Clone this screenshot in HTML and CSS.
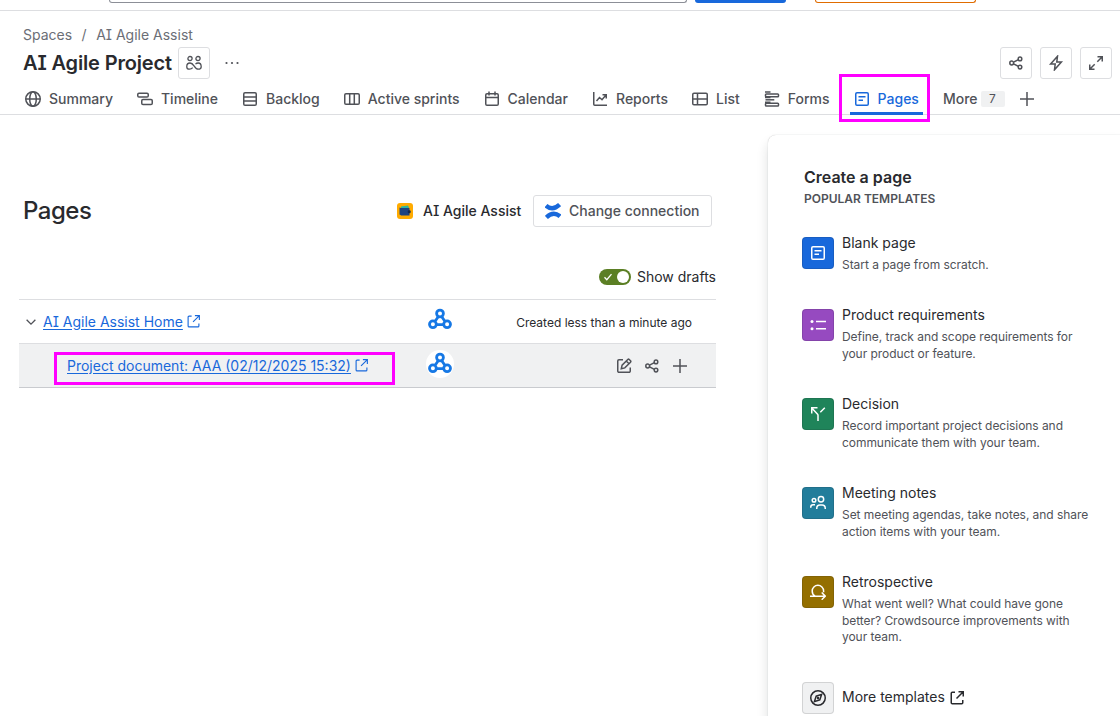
FILE: index.html
```html
<!DOCTYPE html>
<html lang="en">
  <head>
    <meta charset="UTF-8" />
    <meta name="viewport" content="width=device-width, initial-scale=1.0" />
    <title>AI Agile Project - Pages</title>
    <link rel="stylesheet" href="styles.css">
  </head>
  <body>
    <!-- shared icons -->
    <svg class="sprite">
      <symbol id="share" viewBox="0 0 16 16">
        <circle cx="3.7" cy="8" r="1.9" /><circle cx="12" cy="3.9" r="1.8" /><circle cx="12" cy="12.1" r="1.8" />
        <path d="M5.5 7.2 10.4 4.7M5.5 8.8l4.9 2.5" />
      </symbol>
      <symbol id="external" viewBox="0 0 16 16">
        <path d="M6 2.25H3.25a1 1 0 0 0-1 1v9.5a1 1 0 0 0 1 1h9.5a1 1 0 0 0 1-1V10M9.5 1.75h4.75V6.5M14 2 7.5 8.5" />
      </symbol>
      <symbol id="page" viewBox="0 0 16 16">
        <rect x="1.75" y="1.75" width="12.5" height="12.5" rx="1.25" /><path d="M4.5 5.75h7M4.5 9.25h4.5" />
      </symbol>
      <symbol id="plus" viewBox="0 0 16 16"><path d="M8 1v14M1 8h14" /></symbol>
      <symbol id="hook" viewBox="0 0 24 24">
        <path d="M10.4 8.500 7.300 13M13.600 8.500l3.100 4.500M8.500 16.600h7" /><circle cx="12" cy="5.500" r="3.400" /><circle cx="4.900" cy="16.300" r="3.400" /><circle cx="19.100" cy="16.300" r="3.400" />
      </symbol>
    </svg>

    <div class="topbar">
      <div class="search"></div>
      <div class="create"></div>
      <div class="trial"></div>
    </div>

    <header>
      <div class="breadcrumbs"><span>Spaces</span><span>/</span><span>AI Agile Assist</span></div>
      <div class="title-row">
        <h1>AI Agile Project</h1>
        <button class="icon-btn">
          <svg class="icon people" viewBox="0 0 16 16"><circle cx="4" cy="3.6" r="2.1" /><circle cx="12" cy="3.6" r="2.1" /><path d="M.8 12v-.7C.8 9.300 2.200 8 4 8c2.200 0 3 1.300 4 2.900s2.200 3.300 4.300 3.300c1.700 0 2.900-.8 2.900-2.500C15.200 9.500 14 8 12.200 8c-1.200 0-2 .4-2.700 1.100M.8 12c0 1.400 1 2.200 2.700 2.200 1.400 0 2.400-.5 3.200-1.500" /></svg>
        </button>
        <svg class="icon dots" viewBox="0 0 14 16"><circle cx="1.500" cy="8" r="1.100" /><circle cx="7" cy="8" r="1.100" /><circle cx="12.500" cy="8" r="1.100" /></svg>
        <div class="actions">
          <button class="icon-btn"><svg class="icon"><use href="#share" /></svg></button>
          <button class="icon-btn"><svg class="icon" viewBox="0 0 16 16"><path d="M9.500 1.200 2.600 9h4.600l-.7 5.800L13.400 7H8.800z" /></svg></button>
          <button class="icon-btn"><svg class="icon" viewBox="0 0 16 16"><path d="M9.500 1.750h4.750V6.500M14 2 9.300 6.700M6.500 14.250H1.750V9.500M2 14l4.700-4.700" /></svg></button>
        </div>
      </div>
      <nav>
        <a href="#"><svg class="icon" viewBox="0 0 16 16"><circle cx="8" cy="8" r="7.250" /><ellipse cx="8" cy="8" rx="3.300" ry="7.250" /><path d="M.75 8h14.500" /></svg>Summary</a>
        <a href="#"><svg class="icon" viewBox="0 0 16 16"><rect x=".75" y="2.250" width="10.500" height="3.700" rx="1.250" /><rect x="4.750" y="8.500" width="10.500" height="5" rx="1.250" /></svg>Timeline</a>
        <a href="#"><svg class="icon" viewBox="0 0 16 16"><rect x="1.750" y="1.750" width="12.500" height="12.500" rx="1.250" /><path d="M2 6h12M2 10h12" /></svg>Backlog</a>
        <a href="#"><svg class="icon" viewBox="0 0 16 16"><rect x=".75" y="2.750" width="14.500" height="10.500" rx="1.250" /><path d="M5.700 3v10M10.300 3v10" /></svg>Active sprints</a>
        <a href="#"><svg class="icon" viewBox="0 0 16 16"><rect x="1.750" y="2.750" width="12.500" height="11.500" rx="1.250" /><path d="M2 6.500h12M5 .5V4.500M11 .5V4.500" /></svg>Calendar</a>
        <a href="#"><svg class="icon" viewBox="0 0 16 16"><path d="M1.750 1v12.250a1 1 0 0 0 1 1H15M4.500 10l3-3.500 2.500 2.250 4-4.750M10.500 3.750h3.750V7.500" /></svg>Reports</a>
        <a href="#"><svg class="icon" viewBox="0 0 16 16"><rect x=".75" y="2.250" width="14.500" height="11.500" rx="1.250" /><path d="M1 8h14M5.500 2.500v11" /></svg>List</a>
        <a href="#"><svg class="icon" viewBox="0 0 16 16"><path d="M1 .9h5.500M1 6.600h5.500M1 11.200h5.500" /><rect x="1.500" y="3" width="13" height="2.800" rx=".8" /><path d="M1.500 8.800h8.800" /><rect x="1.500" y="12.200" width="13" height="2.800" rx=".8" /></svg>Forms</a>
        <a href="#" class="active"><svg class="icon"><use href="#page" /></svg>Pages<i class="highlight highlight-tab"></i></a>
        <a href="#" class="more">More<span class="badge">7</span></a>
        <svg class="icon add"><use href="#plus" /></svg>
      </nav>
    </header>

    <main>
      <section class="pages">
        <div class="pages-head">
          <h2>Pages</h2>
          <svg class="space-logo" viewBox="0 0 16 16">
            <rect width="16" height="16" rx="3" fill="#ffab00" />
            <path d="M4 5V3.500l7-1 1.200 2.500z" fill="#2fb5a2" />
            <path d="M2.500 4.500 4 5h8.500v7.500H4.200L2.500 11.500z" fill="#1f4480" />
            <rect x="10.800" y="7.300" width="2.800" height="3" rx="1" fill="#172b4d" />
          </svg>
          <span class="space-name">AI Agile Assist</span>
          <button class="connection">
            <svg class="confluence" viewBox="0 0 16 16"><path d="M1 2.600C5.200 6.200 9.500 6.400 14.600 1.600" /><path d="M15 13.400C10.800 9.800 6.500 9.600 1.400 14.400" /></svg>
            Change connection
          </button>
        </div>
        <div class="drafts">
          <span class="toggle"><svg viewBox="0 0 12 12"><path d="m2.500 6.300 2.300 2.400 4.700-5.500" /></svg><b></b></span>
          Show drafts
        </div>

        <div class="tree">
          <div class="row">
            <svg class="icon chevron" viewBox="0 0 16 16"><path d="m3 5.500 5 5 5-5" /></svg>
            <a href="#">AI Agile Assist Home</a>
            <svg class="icon ext"><use href="#external" /></svg>
            <span class="avatar"><svg><use href="#hook" /></svg></span>
            <span class="created">Created less than a minute ago</span>
          </div>
          <div class="row child">
            <a href="#">Project document: AAA (02/12/2025 15:32)</a>
            <svg class="icon ext"><use href="#external" /></svg>
            <span class="avatar"><svg><use href="#hook" /></svg></span>
            <span class="row-actions">
              <svg class="icon" viewBox="0 0 16 16"><path d="M7 1.750H3a1.250 1.250 0 0 0-1.250 1.250v10A1.250 1.250 0 0 0 3 14.250h10A1.250 1.250 0 0 0 14.250 13V9.500M5.300 10.700l.8-3.500 5.700-5.700a1 1 0 0 1 1.400 0l1.300 1.300a1 1 0 0 1 0 1.400L8.800 9.900zM10.300 3l2.700 2.700" /></svg>
              <svg class="icon"><use href="#share" /></svg>
              <svg class="icon"><use href="#plus" /></svg>
            </span>
            <i class="highlight highlight-row"></i>
          </div>
        </div>
      </section>

      <aside>
        <h3>Create a page</h3>
        <h4>POPULAR TEMPLATES</h4>
        <div class="template">
          <span class="tile blue"><svg class="icon"><use href="#page" /></svg></span>
          <div><h5>Blank page</h5><p>Start a page from scratch.</p></div>
        </div>
        <div class="template">
          <span class="tile purple"><svg class="icon" viewBox="0 0 16 16"><path d="M6 4.500h10M6 11.700h10" /><circle class="dot" cx="2" cy="4.500" r="1.500" /><circle class="dot" cx="2" cy="11.700" r="1.500" /></svg></span>
          <div><h5>Product requirements</h5><p>Define, track and scope requirements for<br>your product or feature.</p></div>
        </div>
        <div class="template">
          <span class="tile green"><svg class="icon" viewBox="0 0 16 16"><path d="M8 15V9.200a1.500 1.500 0 0 0-.4-1L2 2.300M1.750 7.500V1.750H7.500M10.300 6.200 14.800 1.700" /></svg></span>
          <div><h5>Decision</h5><p>Record important project decisions and<br>communicate them with your team.</p></div>
        </div>
        <div class="template">
          <span class="tile teal"><svg class="icon" viewBox="0 0 16 16"><circle cx="11" cy="4.200" r="2.700" /><circle cx="4" cy="5.300" r="1.800" /><path d="M6.750 14v-.7c0-2 1.300-3.300 3.200-3.300h2.100c1.900 0 3.200 1.300 3.200 3.300v.7M.75 12.700v-.5C.75 10.700 1.700 9.750 3 9.750h2" /></svg></span>
          <div><h5>Meeting notes</h5><p>Set meeting agendas, take notes, and share<br>action items with your team.</p></div>
        </div>
        <div class="template">
          <span class="tile brown"><svg class="icon" viewBox="0 0 16 16"><path d="M0 12.200h15M11.700 8.500l3.600 3.700-3.600 3.500M5 12C3 11 2.200 9 2.200 7a5.700 5.700 0 0 1 11.400 0v1.300" /></svg></span>
          <div><h5>Retrospective</h5><p>What went well? What could have gone<br>better? Crowdsource improvements with<br>your team.</p></div>
        </div>
        <div class="template more-templates">
          <span class="tile plain"><svg class="icon" viewBox="0 0 16 16"><circle cx="8" cy="8" r="7.250" /><path d="M11.600 4.400 9.800 9.800 4.400 11.600 6.200 6.200z" /><circle class="dot" cx="8" cy="8" r="1.200" /></svg></span>
          <h5>More templates</h5>
          <svg class="icon"><use href="#external" /></svg>
        </div>
      </aside>
    </main>
  </body>
</html>
```
FILE: styles.css
```css
* {
  box-sizing: border-box;
}

body {
  margin: 0;
  height: 716px;
  overflow: hidden;
  background: #fff;
  color: #292a2e;
  font-family: Inter, "Liberation Sans", sans-serif;
  font-feature-settings: "cv08";
  font-size: 14px;
  line-height: 20px;
}

h1, h2, h3, h4, h5, p {
  margin: 0;
}

button {
  padding: 0;
  background: #fff;
  border: 1px solid #dddee1;
  border-radius: 3px;
  font: inherit;
  color: #505258;
}

.sprite {
  position: absolute;
  width: 0;
  height: 0;
}

.icon {
  flex: none;
  width: 16px;
  height: 16px;
  fill: none;
  stroke: currentColor;
  stroke-width: 1.5;
}

/* top bar, only its lower edge is visible */
.topbar {
  display: flex;
  height: 11px;
  padding-left: 109px;
  border-bottom: 1px solid #dddee1;
}

.topbar div {
  height: 3px;
  border-radius: 0 0 4px 4px;
}

.search {
  width: 578px;
  border: 1px solid #8c8f97;
  border-top: 0;
}

.create {
  width: 91px;
  margin-left: 8px;
  background: #1868db;
}

.trial {
  width: 161px;
  margin-left: 29px;
  border: 1px solid #e06c00;
  border-top: 0;
}

/* project header */
header {
  height: 104px;
  padding: 14px 8px 0 23px;
  border-bottom: 1px solid #dddee1;
}

.breadcrumbs {
  display: flex;
  gap: 9.5px;
  color: #6b6e76;
}

.title-row {
  display: flex;
  align-items: center;
  height: 32px;
  margin-top: 2px;
}

h1 {
  width: 155px;
  font-size: 20px;
  line-height: 24px;
  font-weight: 600;
  letter-spacing: -0.15px;
  white-space: nowrap;
}

.icon-btn {
  display: flex;
  align-items: center;
  justify-content: center;
  width: 32px;
  height: 32px;
}

.people {
  stroke-width: 1.3;
}

.dots {
  width: 14px;
  margin-left: 15px;
  fill: #505258;
  stroke: none;
}

.actions {
  display: flex;
  gap: 8px;
  margin-left: auto;
}

nav {
  display: flex;
  align-items: center;
  gap: 24px;
  height: 36px;
  padding: 4px 0 0 2px;
}

nav a {
  display: flex;
  align-items: center;
  gap: 8px;
  height: 32px;
  color: #505258;
  font-weight: 500;
  text-decoration: none;
  white-space: nowrap;
}

nav a.active {
  position: relative;
  color: #1868db;
}

nav a.active::after {
  content: "";
  position: absolute;
  left: -4px;
  right: -4px;
  bottom: 0;
  height: 3px;
  background: #1868db;
}

nav a.more {
  gap: 3px;
}

.badge {
  width: 24px;
  height: 16px;
  border-radius: 2px;
  background: #f0f1f2;
  font-size: 12px;
  line-height: 16px;
  font-weight: 400;
  text-align: center;
}

.add {
  margin-left: -10px;
  color: #505258;
}

/* marker frames */
.highlight {
  position: absolute;
  border: 3px solid #ff00ff;
  z-index: 2;
}

.highlight-tab {
  left: -15px;
  top: -9px;
  width: 91px;
  height: 48px;
}

.highlight-row {
  left: 35px;
  top: 8px;
  width: 341px;
  height: 33px;
}

main {
  display: flex;
  justify-content: space-between;
}

.pages {
  width: 697px;
  margin-left: 19px;
  padding-top: 80px;
}

.pages-head {
  display: flex;
  align-items: center;
  height: 32px;
  padding: 0 4px;
}

h2 {
  margin-right: auto;
  font-size: 24px;
  line-height: 28px;
  font-weight: 500;
  letter-spacing: -0.5px;
}

.space-logo {
  width: 16px;
  height: 16px;
  margin-right: 10px;
}

.space-name {
  width: 98px;
  margin-right: 12px;
  font-weight: 500;
  white-space: nowrap;
}

.connection {
  display: flex;
  align-items: center;
  gap: 8px;
  width: 179px;
  height: 32px;
  padding-left: 11px;
  font-weight: 500;
  white-space: nowrap;
}

.confluence {
  width: 16px;
  height: 16px;
  fill: none;
  stroke: #1868db;
  stroke-width: 4.4;
}

.drafts {
  display: flex;
  align-items: center;
  justify-content: flex-end;
  gap: 6px;
  height: 20px;
  margin: 40px 0 12px;
}

.toggle {
  display: flex;
  align-items: center;
  justify-content: space-between;
  width: 32px;
  height: 16px;
  padding: 0 2px 0 3px;
  border-radius: 8px;
  background: #5b7f24;
}

.toggle svg {
  width: 12px;
  height: 12px;
  fill: none;
  stroke: #fff;
  stroke-width: 1.3;
}

.toggle b {
  width: 12px;
  height: 12px;
  border-radius: 50%;
  background: #fff;
}

/* page tree */
.tree {
  border-top: 1px solid #dddee1;
}

.row {
  position: relative;
  display: grid;
  grid-template-columns: 24px auto auto 1fr 28px 262px;
  align-items: center;
  height: 44px;
  border-bottom: 1px solid #dddee1;
}

.row a {
  grid-column: 2;
  color: #1868db;
  text-underline-offset: 2px;
  white-space: nowrap;
}

.child {
  grid-template-columns: 48px auto auto 1fr 28px 262px;
  background: #f0f1f2;
  border-color: #c9cbcf;
}

.chevron {
  width: 14px;
  height: 14px;
  margin-left: 5px;
  color: #505258;
}

.ext {
  width: 15px;
  height: 15px;
  margin: -1px 0 0 3px;
  color: #1868db;
  stroke-width: 1.2;
}

.avatar {
  grid-column: 5;
  display: flex;
  align-items: center;
  justify-content: center;
  width: 28px;
  height: 28px;
  margin-top: -3px;
  border-radius: 50%;
  background: #fff;
}

.avatar svg {
  width: 24px;
  height: 24px;
  fill: none;
  stroke: #1678e5;
  stroke-width: 2.8;
}

.created {
  grid-column: 6;
  padding: 2px 24px 0 0;
  font-size: 12px;
  text-align: right;
}

.row-actions {
  grid-column: 6;
  display: flex;
  justify-content: flex-end;
  gap: 12px;
  padding-right: 28px;
  color: #505258;
}

/* templates panel */
aside {
  width: 352px;
  height: 600px;
  margin-top: 20px;
  padding: 32px 0 0 36px;
  border-radius: 8px 0 0 0;
  background: #fff;
  box-shadow: 0 8px 12px rgba(30, 31, 33, 0.15), 0 0 1px rgba(30, 31, 33, 0.31);
}

h3 {
  font-size: 16px;
  line-height: 20px;
  font-weight: 600;
}

h4 {
  margin-top: 4px;
  color: #505258;
  font-size: 12px;
  line-height: 16px;
  font-weight: 600;
}

.template {
  display: flex;
  gap: 8px;
  margin: 0 0 31.5px -2px;
}

h4 + .template {
  margin-top: 26.2px;
}

h5 {
  font-size: 14px;
  line-height: 20px;
  font-weight: 400;
}

.template p {
  margin-top: 4px;
  color: #505258;
  font-size: 12px;
  line-height: 16.67px;
  letter-spacing: -0.05px;
  white-space: nowrap;
}

.tile {
  display: flex;
  align-items: center;
  justify-content: center;
  width: 32px;
  height: 32px;
  margin-top: 4px;
  border: 1px solid rgba(30, 31, 33, 0.14);
  border-radius: 4px;
  color: #fff;
}

.dot {
  fill: currentColor;
  stroke: none;
}

.blue { background: #1868db; }
.purple { background: #964ac0; }
.green { background: #1f845a; }
.teal { background: #227d9b; }
.brown { background: #946f00; }

.plain {
  background: #f0f1f2;
  color: #292a2e;
}

.more-templates {
  gap: 0;
  align-items: center;
}

.more-templates .tile {
  margin: 5px 8px 0 0;
}

.more-templates h5 {
  margin-top: 2px;
}

.more-templates > .icon {
  margin: 5px 0 0 4px;
}
```
